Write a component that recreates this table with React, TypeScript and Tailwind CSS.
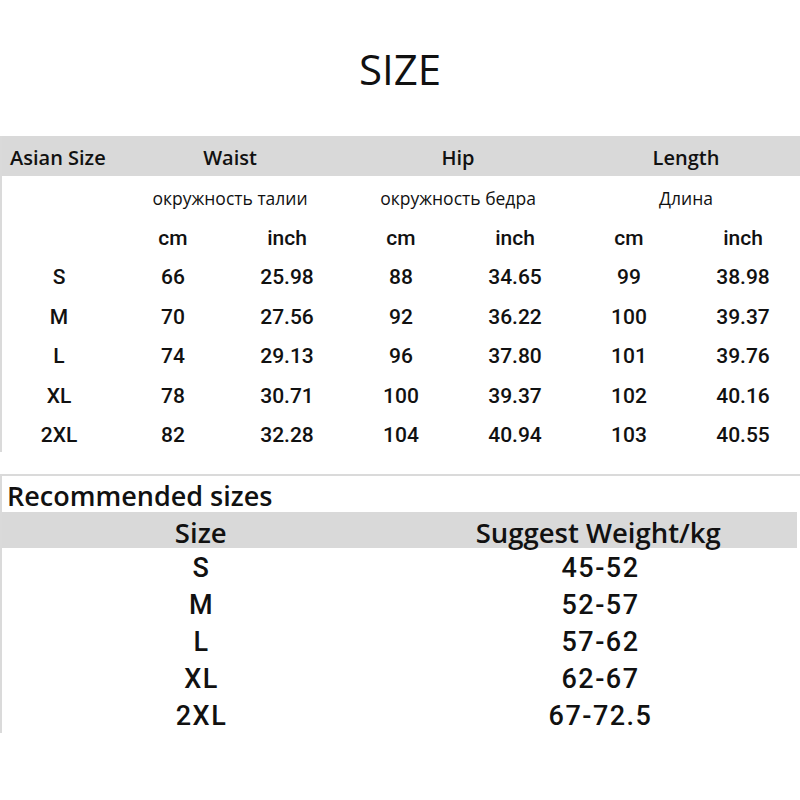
import React from "react";

const rows = [
  ["S", "66", "25.98", "88", "34.65", "99", "38.98"],
  ["M", "70", "27.56", "92", "36.22", "100", "39.37"],
  ["L", "74", "29.13", "96", "37.80", "101", "39.76"],
  ["XL", "78", "30.71", "100", "39.37", "102", "40.16"],
  ["2XL", "82", "32.28", "104", "40.94", "103", "40.55"],
];

const rec = [
  ["S", "45-52"],
  ["M", "52-57"],
  ["L", "57-62"],
  ["XL", "62-67"],
  ["2XL", "67-72.5"],
];

const head = { fontFamily: '"Open Sans", "Noto Sans", sans-serif' };
const num = { fontFamily: 'Roboto, "Liberation Sans", Arial, sans-serif' };

export default function App() {
  return (
    <div className="w-[800px] h-[800px] bg-white text-[#111] overflow-hidden">
      <div className="h-[136px] flex items-center justify-center pt-[2px]">
        <span className="text-[42px] leading-none" style={head}>
          SIZE
        </span>
      </div>

      <div className="border-l-2 border-[#dadada]">
        <div className="grid grid-cols-7 h-[39.5px] pt-[5px] bg-[#d9d9d9] items-center text-[20px] font-semibold" style={head}>
          <div className="pl-[8px] whitespace-nowrap">Asian Size</div>
          <div className="col-span-2 text-center">Waist</div>
          <div className="col-span-2 text-center">Hip</div>
          <div className="col-span-2 text-center">Length</div>
        </div>
        <div className="grid grid-cols-7 h-[39.5px] pt-[5px] items-center text-[17.5px] font-medium" style={head}>
          <div></div>
          <div className="col-span-2 text-center">окружность талии</div>
          <div className="col-span-2 text-center">окружность бедра</div>
          <div className="col-span-2 text-center">Длина</div>
        </div>
        <div className="grid grid-cols-7 h-[39.5px] pt-[7px] items-center text-[21px] font-medium" style={num}>
          <div></div>
          <div className="text-center">cm</div>
          <div className="text-center">inch</div>
          <div className="text-center">cm</div>
          <div className="text-center">inch</div>
          <div className="text-center">cm</div>
          <div className="text-center">inch</div>
        </div>
        {rows.map((r) => (
          <div key={r[0]} className="grid grid-cols-7 h-[39.5px] pt-[7px] items-center text-[21px] font-medium" style={num}>
            {r.map((c, i) => (
              <div key={i} className="text-center">
                {c}
              </div>
            ))}
          </div>
        ))}
      </div>

      <div className="mt-[22px] border-t-2 border-l-2 border-[#dadada]">
        <div className="h-[36px] flex items-center pt-[4px] pl-[5px] text-[27px] font-semibold" style={head}>
          Recommended sizes
        </div>
        <div className="grid grid-cols-2 h-[36px] pb-[4px] bg-[#d9d9d9] items-center text-[27.5px] font-semibold mr-[3px]" style={head}>
          <div className="text-center">Size</div>
          <div className="text-center">Suggest Weight/kg</div>
        </div>
        {rec.map((r) => (
          <div key={r[0]} className="grid grid-cols-2 h-[37px] items-center text-[27px] font-medium tracking-[1.5px]" style={num}>
            <div className="text-center">{r[0]}</div>
            <div className="text-center">{r[1]}</div>
          </div>
        ))}
      </div>
    </div>
  );
}
